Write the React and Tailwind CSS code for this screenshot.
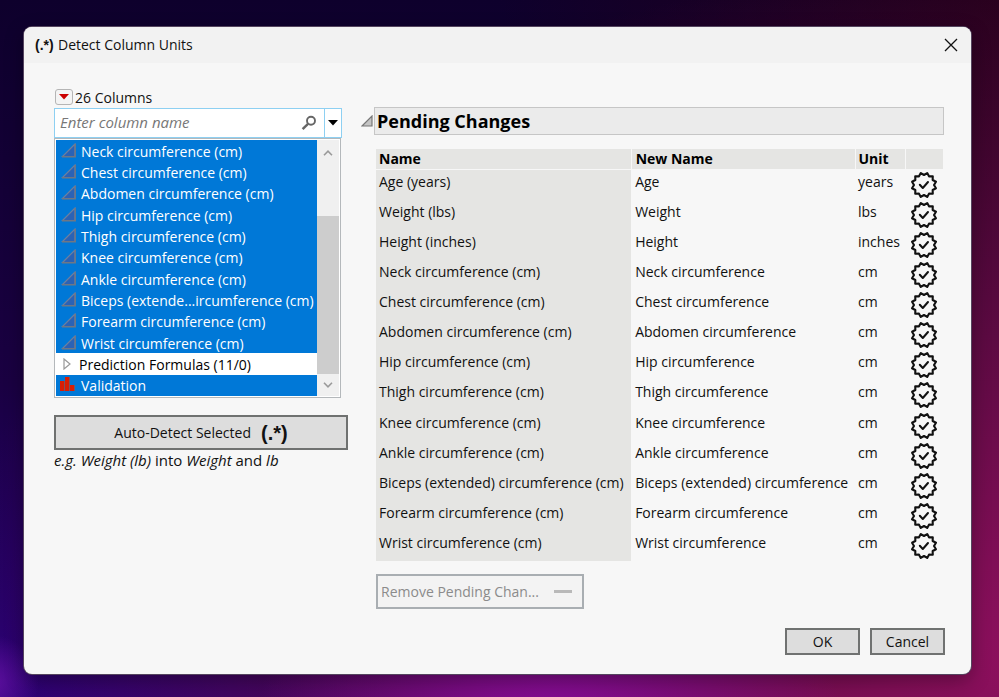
import React, { useState } from 'react';

const listColumns = [
    'Neck circumference (cm)',
    'Chest circumference (cm)',
    'Abdomen circumference (cm)',
    'Hip circumference (cm)',
    'Thigh circumference (cm)',
    'Knee circumference (cm)',
    'Ankle circumference (cm)',
    'Biceps (extende...ircumference (cm)',
    'Forearm circumference (cm)',
    'Wrist circumference (cm)',
];

const pending = [
    ['Age', 'years'],
    ['Weight', 'lbs'],
    ['Height', 'inches'],
    ['Neck circumference', 'cm'],
    ['Chest circumference', 'cm'],
    ['Abdomen circumference', 'cm'],
    ['Hip circumference', 'cm'],
    ['Thigh circumference', 'cm'],
    ['Knee circumference', 'cm'],
    ['Ankle circumference', 'cm'],
    ['Biceps (extended) circumference', 'cm'],
    ['Forearm circumference', 'cm'],
    ['Wrist circumference', 'cm'],
];

// 12 teeth, with a notch at the top
const badgePoints = Array.from({ length: 24 }, (_, i) => {
    const r = i % 2 ? 12.4 : 10;
    const a = (i * Math.PI) / 12;
    return `${(14 + r * Math.sin(a)).toFixed(2)},${(14 - r * Math.cos(a)).toFixed(2)}`;
}).join(' ');

function VerifiedIcon() {
    return (
        <svg viewBox="0 0 28 28" className="w-7 h-7 mx-auto" fill="none" stroke="#111">
            <polygon points={badgePoints} strokeWidth="2.1" strokeLinejoin="round" />
            <path d="M9.8 13.8l3 3.2 5.2-6" strokeWidth="2" strokeLinecap="round" strokeLinejoin="round" />
        </svg>
    );
}

function ContinuousIcon() {
    return (
        <svg viewBox="0 0 16 16" className="w-4 h-4 shrink-0">
            <path d="M1.5 13.5L14 1v12.5z" fill="#2b62b5" stroke="#6d7f9e" strokeWidth="1.2" />
            <path d="M1 13.8h13.2V1" fill="none" stroke="#6f7784" strokeWidth="1.4" />
        </svg>
    );
}

function NominalIcon() {
    return (
        <svg viewBox="0 0 16 16" className="w-4 h-4 shrink-0">
            <path d="M0 4h4v10H0zM5 0h4v14H5zM10 8h4v6h-4z" fill="#d81e05" />
            <path d="M4.5 4v10M9.5 0v14M14.5 8v6" fill="none" stroke="#7a5560" strokeWidth="1" />
        </svg>
    );
}

function Chevron({ up }) {
    return (
        <svg viewBox="0 0 10 6" className="w-[10px] h-[6px]" fill="none" stroke="#9a9a9a" strokeWidth="1.6">
            <path d={up ? 'M1 5.2L5 1.2l4 4' : 'M1 .8l4 4 4-4'} />
        </svg>
    );
}

function TitleBar() {
    return (
        <header className="flex items-center h-9 pl-[11px] pr-[13px] bg-[#f2f2f2]">
            <span className="w-[23px] font-['Liberation_Sans',sans-serif] text-sm leading-5 font-bold">(.*)</span>
            <h1 className="text-sm">Detect Column Units</h1>
            <button aria-label="Close" className="ml-auto">
                <svg viewBox="0 0 14 14" className="w-[14px] h-[14px]" stroke="#111" strokeWidth="1.3">
                    <path d="M1 1l12 12M13 1L1 13" />
                </svg>
            </button>
        </header>
    );
}

function ColumnPicker() {
    const [q, setQ] = useState('');

    return (
        <section className="w-[294px] shrink-0">
            <div className="flex items-center gap-[2px] h-[22px]">
                <button aria-label="Columns menu" className="flex items-center justify-center w-[18px] h-4 ml-px rounded-[3px] border border-[#b5b5b5] bg-[#f4f4f4]">
                    <svg viewBox="0 0 10 6" className="w-[10px] h-[6px]">
                        <path d="M0 0h10L5 5.5z" fill="#cc0000" />
                    </svg>
                </button>
                <span className="pt-px text-sm">26 Columns</span>
            </div>

            <div className="flex w-[288px] h-[30px] border border-[#8ed0f2] bg-white">
                <input
                    aria-label="Enter column name"
                    value={q}
                    onChange={e => setQ(e.target.value)}
                    placeholder="Enter column name"
                    className="flex-1 min-w-0 pl-[5px] pb-px text-[15px] italic outline-none placeholder:text-[#777]"
                />
                <button aria-label="Search" className="px-[7px]">
                    <svg viewBox="0 0 16 16" className="w-4 h-4" fill="none" stroke="#666">
                        <circle cx="10" cy="5.8" r="4" strokeWidth="1.9" />
                        <path d="M7 8.8L1.6 14.2" strokeWidth="2.4" />
                    </svg>
                </button>
                <button aria-label="Show filters" className="flex items-center justify-center w-[17px] border-l border-[#8ed0f2]">
                    <svg viewBox="0 0 10 6" className="w-[10px] h-[6px]">
                        <path d="M0 0h10L5 5.5z" fill="#000" />
                    </svg>
                </button>
            </div>

            <div className="flex w-[287px] border border-[#b4b8bb] bg-white p-px">
                <ul role="listbox" aria-label="Columns" aria-multiselectable="true" className="flex-1 grid grid-rows-12 h-64 text-sm leading-5 text-white">
                    {listColumns.map(name => (
                        <li key={name} role="option" aria-selected="true" className="flex items-center gap-1 pl-[5px] bg-[#0078d7]">
                            <ContinuousIcon />
                            <span className="pt-[2px] whitespace-nowrap">{name}</span>
                        </li>
                    ))}
                    <li role="option" aria-selected="false" className="flex items-center gap-2 pl-[7px] text-black">
                        <svg viewBox="0 0 8 12" className="w-2 h-3" fill="#fff" stroke="#999" strokeWidth="1.2">
                            <path d="M1 1l6 5-6 5z" />
                        </svg>
                        <span className="pt-[2px]">Prediction Formulas (11/0)</span>
                    </li>
                    <li role="option" aria-selected="true" className="flex items-center gap-[5px] pl-1 bg-[#0078d7]">
                        <NominalIcon />
                        <span className="pt-[2px]">Validation</span>
                    </li>
                </ul>
                <div className="flex flex-col w-[22px] bg-[#f0f0f0]">
                    <div className="flex items-center justify-center h-[26px]"><Chevron up /></div>
                    <div className="h-[158px] mt-[50px] bg-[#cdcdcd]" />
                    <div className="flex flex-1 items-center justify-center"><Chevron /></div>
                </div>
            </div>

            <button className="flex items-center justify-center gap-[10px] w-full h-[35px] mt-[17px] border-2 border-[#6f7170] bg-[#dddddd] text-sm">
                Auto-Detect Selected
                <span className="font-['Liberation_Sans',sans-serif] text-xl leading-5 font-bold">(.*)</span>
            </button>
            <p className="text-[15px] leading-5"><i>e.g. Weight (lb)</i> into <i>Weight</i> and <i>lb</i></p>
        </section>
    );
}

function PendingChanges() {
    return (
        <section className="flex-1 min-w-0 pt-[21px]">
            <div className="flex items-center gap-px">
                <svg viewBox="0 0 12 12" className="w-3 h-3 shrink-0">
                    <path d="M1 11L11 1v10z" fill="#c4c4c4" stroke="#777" strokeWidth="1.2" />
                </svg>
                <h2 className="flex-1 h-7 pl-[2px] border border-[#c6c6c6] bg-[#ebebeb] text-lg leading-[26px] font-bold text-black">Pending Changes</h2>
            </div>

            <div className="pl-[15px] pr-px">
                <table className="w-full h-[412px] mt-[14px] table-fixed border-collapse text-sm leading-5">
                    <thead>
                        <tr className="h-5 text-left text-black bg-[#e5e5e3] border-b border-[#f7f7f7]">
                            <th className="w-[45%] p-0 pl-[3px]">Name</th>
                            <th className="p-0 pl-1 border-l border-[#f7f7f7]">New Name</th>
                            <th className="w-[50px] p-0 pl-[3px] border-l border-[#f7f7f7]">Unit</th>
                            <th className="w-[38px] p-0 border-l border-[#f7f7f7]" />
                        </tr>
                    </thead>
                    <tbody>
                        {pending.map(([name, unit]) => (
                            <tr key={name} className="align-top whitespace-nowrap">
                                <td className="p-0 pt-[2px] pl-[3px] bg-[#e5e5e3]">{name} ({unit})</td>
                                <td className="p-0 pt-[2px] pl-1">{name}</td>
                                <td className="p-0 pt-[2px] pl-[3px]">{unit}</td>
                                <td className="p-0 pt-px"><VerifiedIcon /></td>
                            </tr>
                        ))}
                    </tbody>
                </table>

                <button disabled className="flex items-center justify-between w-[208px] h-[35px] mt-[13px] pl-[3px] pr-[10px] border-2 border-[#a9aeb2] bg-[#f3f3f3] text-sm text-[#8b8b8b]">
                    Remove Pending Chan...
                    <span className="w-[18px] h-[3px] bg-[#b9b9b9]" />
                </button>
            </div>
        </section>
    );
}

export default function App() {
    return (
        <div className="flex min-h-screen pt-[27px] pr-7 pb-[23px] pl-6 font-['Open_Sans','Noto_Sans',sans-serif] text-[#111] bg-[radial-gradient(circle_at_-1%_98%,#6010a0_0%,transparent_4%),radial-gradient(ellipse_at_55%_112%,#8a0ca0_0%,transparent_38%),radial-gradient(ellipse_at_105%_95%,#90105f_0%,#5c0a42_35%,transparent_75%),linear-gradient(90deg,transparent_50%,#24001a_100%),linear-gradient(180deg,#0e002c_0%,#1a0042_55%,#1f005c_75%,#26007e_100%)]">
            <main className="flex flex-col flex-1 min-w-0 rounded-lg overflow-hidden bg-[#f7f7f7] shadow-[0_0_0_1px_#55455f,0_6px_20px_#00000055]">
                <TitleBar />
                <div className="flex gap-[13px] pt-[23px] pl-[30px] pr-[27px]">
                    <ColumnPicker />
                    <PendingChanges />
                </div>
                <footer className="flex justify-end gap-[10px] mt-auto pt-4 pr-[26px] pb-[19px]">
                    <button className="w-[75px] h-[27px] border-2 border-[#707271] bg-[#dddddd] text-sm">OK</button>
                    <button className="w-[75px] h-[27px] border-2 border-[#707271] bg-[#dddddd] text-sm">Cancel</button>
                </footer>
            </main>
        </div>
    );
}
